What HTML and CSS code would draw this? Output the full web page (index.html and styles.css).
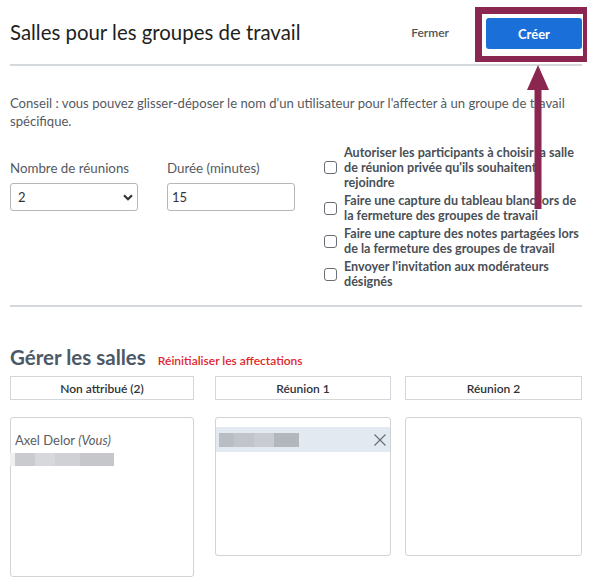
FILE: index.html
```html
<!DOCTYPE html>
<html lang="fr">
<head>
<meta charset="utf-8">
<title>Salles pour les groupes de travail</title>
<link rel="stylesheet" href="styles.css">
</head>
<body>
<div class="page">
  <header class="header">
    <h1 class="title">Salles pour les groupes de travail</h1>
    <div class="actions">
      <button class="btn-link">Fermer</button>
      <button class="btn-primary">Créer</button>
    </div>
  </header>

  <p class="tip">Conseil : vous pouvez glisser-déposer le nom d'un utilisateur pour l'affecter à un groupe de travail spécifique.</p>

  <section class="settings">
    <div class="fields">
      <div class="field">
        <label class="field-label">Nombre de réunions</label>
        <div class="select">
          <span>2</span>
          <svg width="10" height="7" viewBox="0 0 10 7"><path d="M1 1.2 L5 5.2 L9 1.2" fill="none" stroke="#333" stroke-width="2.2"/></svg>
        </div>
      </div>
      <div class="field">
        <label class="field-label">Durée (minutes)</label>
        <div class="input">15</div>
      </div>
    </div>
    <div class="checks">
      <label class="check"><input type="checkbox"><span>Autoriser les participants à choisir la salle de réunion privée qu'ils souhaitent rejoindre</span></label>
      <label class="check"><input type="checkbox"><span>Faire une capture du tableau blanc lors de la fermeture des groupes de travail</span></label>
      <label class="check"><input type="checkbox"><span>Faire une capture des notes partagées lors de la fermeture des groupes de travail</span></label>
      <label class="check"><input type="checkbox"><span>Envoyer l'invitation aux modérateurs désignés</span></label>
    </div>
  </section>

  <hr class="divider">

  <section class="rooms">
    <div class="rooms-head">
      <h2 class="rooms-title">Gérer les salles</h2>
      <a class="reset">Réinitialiser les affectations</a>
    </div>
    <div class="cols">
      <div class="col col-1">
        <div class="col-head">Non attribué (2)</div>
        <div class="box box-tall">
          <div class="person">Axel Delor <em>(Vous)</em></div>
          <div class="blur blur-a"></div>
        </div>
      </div>
      <div class="col col-2">
        <div class="col-head">Réunion 1</div>
        <div class="box">
          <div class="assigned">
            <div class="blur blur-b"></div>
            <svg class="x" width="12" height="12" viewBox="0 0 12 12"><path d="M0.5 0.5 L11.5 11.5 M11.5 0.5 L0.5 11.5" stroke="#6b6f76" stroke-width="1.2"/></svg>
          </div>
        </div>
      </div>
      <div class="col col-3">
        <div class="col-head">Réunion 2</div>
        <div class="box"></div>
      </div>
    </div>
  </section>
</div>

<div class="annot-box"></div>
<svg class="annot-arrow" width="24" height="146" viewBox="0 0 24 146">
  <polygon points="11,0 22,25 0,25" fill="#8a2650"/>
  <rect x="7.5" y="22" width="7" height="122" fill="#8a2650"/>
</svg>
</body>
</html>
```

FILE: styles.css
```css
* { box-sizing: border-box; }
html, body { margin: 0; padding: 0; background: #fff; }
body {
  font-family: Lato, "Open Sans", sans-serif;
  color: #333;
  width: 595px;
  height: 584px;
  overflow: hidden;
  position: relative;
}
.page { padding: 0 13px 0 10px; }

.header {
  display: flex;
  align-items: center;
  justify-content: space-between;
  height: 66px;
  border-bottom: 2px solid #d5d8dc;
}
.title {
  margin: 0;
  font-size: 20.4px;
  font-weight: 400;
  color: #1e1f21;
}
.actions { display: flex; align-items: center; }
.btn-link {
  border: 0;
  background: none;
  font-family: inherit;
  font-size: 12px;
  font-weight: 600;
  color: #4f545a;
  padding: 0;
  margin-right: 37px;
}
.btn-primary {
  border: 0;
  width: 96px;
  height: 31px;
  border-radius: 3px;
  background: #1b6fd8;
  color: #fff;
  font-family: inherit;
  font-size: 13px;
  font-weight: 700;
  margin-top: 3px;
}

.tip {
  margin: 28px 0 0;
  font-size: 13.1px;
  line-height: 18px;
  color: #55595f;
}

.settings {
  display: flex;
  margin-top: 15px;
}
.fields {
  display: flex;
  gap: 29px;
  margin-top: 14px;
}
.field { width: 128px; display: flex; flex-direction: column; }
.field-label {
  font-size: 13.3px;
  line-height: 18px;
  color: #55595f;
  margin-bottom: 6px;
}
.select, .input {
  height: 28px;
  border: 1px solid #b3b7bc;
  border-radius: 3px;
  font-size: 13px;
  color: #333;
  display: flex;
  align-items: center;
}
.select { justify-content: space-between; padding: 0 4px 0 7px; }
.input { padding: 0 4px; }

.checks {
  margin-left: 29px;
  display: flex;
  flex-direction: column;
  gap: 3px;
  width: 258px;
}
.check {
  display: flex;
  align-items: center;
  font-size: 12.6px;
  font-weight: 700;
  line-height: 15px;
  color: #4a4f57;
}
.check span { width: 236px; }
.check input {
  appearance: none;
  -webkit-appearance: none;
  flex: none;
  width: 13px;
  height: 13px;
  margin: 0 7px 0 0;
  border: 1.5px solid #6b6f75;
  border-radius: 3px;
  background: #fff;
}

.divider {
  margin: 16px 0 0;
  border: 0;
  border-top: 2px solid #d5d8dc;
}

.rooms-head {
  display: flex;
  align-items: baseline;
  margin-top: 38px;
  height: 24px;
}
.rooms-title {
  margin: 0;
  font-size: 20.5px;
  font-weight: 700;
  color: #4d5966;
  line-height: 24px;
}
.reset {
  margin-left: 12px;
  font-size: 12px;
  font-weight: 600;
  color: #e0262c;
}

.cols { display: flex; margin-top: 7px; }
.col-1 { width: 184px; margin-right: 21px; }
.col-2 { width: 176px; margin-right: 14px; }
.col-3 { width: 177px; }
.col-head {
  height: 24px;
  border: 1px solid #d3d6da;
  display: flex;
  align-items: center;
  justify-content: center;
  font-size: 12px;
  font-weight: 600;
  color: #2f3237;
}
.box {
  margin-top: 17px;
  height: 139px;
  border: 1px solid #d0d3d8;
  border-radius: 3px;
}
.box-tall { height: 160px; }

.person {
  margin: 14px 0 0 4px;
  font-size: 13px;
  line-height: 16px;
  color: #5a5e64;
}
.blur {
  height: 13px;
  filter: blur(0.6px);
}
.blur-a {
  margin-top: 5px;
  margin-left: -1px;
  width: 104px;
  background: linear-gradient(90deg, #eef0f2 0 5px, #c9cbcf 5px 25px, #d6d8db 25px 45px, #cfd1d4 45px 70px, #c5c7cb 70px 104px);
}
.assigned {
  margin-top: 9px;
  height: 25px;
  background: #e3e9f0;
  display: flex;
  align-items: center;
  justify-content: space-between;
  padding: 0 4px 0 3px;
}
.blur-b {
  width: 80px;
  height: 14px;
  margin-top: 1px;
  background: linear-gradient(90deg, #b9bdc4 0 15px, #c1c5cb 15px 35px, #c8ccd2 35px 55px, #b2b6bd 55px 80px);
}

.annot-box {
  position: absolute;
  left: 475px;
  top: 7px;
  width: 112px;
  height: 55px;
  border-style: solid;
  border-color: #8a2650;
  border-width: 7px 4px 6px 7px;
}
.annot-arrow {
  position: absolute;
  left: 527px;
  top: 65px;
}
```
